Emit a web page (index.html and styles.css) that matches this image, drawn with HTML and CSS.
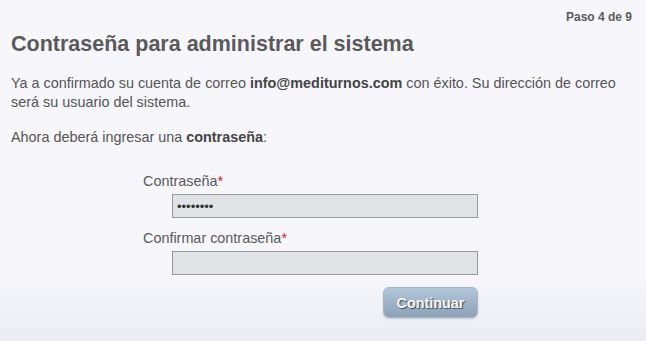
FILE: index.html
```html
<!DOCTYPE html>
<html>
<head>
    <meta charset="utf-8">
    <link rel="stylesheet" href="styles.css">
</head>
<body>
    <div class="wizard">
        <!-- Step counter -->
        <div class="step">Paso 4 de 9</div>

        <h1>Contraseña para administrar el sistema</h1>

        <p>Ya a confirmado su cuenta de correo <b>info@mediturnos.com</b> con éxito. Su dirección de correo será su usuario del sistema.</p>

        <p class="ask">Ahora deberá ingresar una <b>contraseña</b>:</p>

        <!-- Form -->
        <form class="form">
            <label>Contraseña<span class="req">*</span></label>
            <input type="password" value="12345678" />

            <label>Confirmar contraseña<span class="req">*</span></label>
            <input type="password" value="" />

            <div class="actions">
                <button type="button">Continuar</button>
            </div>
        </form>
    </div>
</body>
</html>
```

FILE: styles.css
```css
html, body {
    height: 100%;
}

body {
    margin: 0;
    background: linear-gradient(to bottom, #f6f6fb 0%, #f6f6fb 82%, #eaecf1 100%);
    font-family: "Liberation Sans", Arial, sans-serif;
    color: #555555;
}

.wizard {
    padding: 10px 14px 0 11px;
}

.step {
    text-align: right;
    font-size: 12px;
    font-weight: bold;
    color: #5c5c5c;
    line-height: 14px;
}

h1 {
    margin: 8px 0 0 0;
    font-size: 21.5px;
    line-height: 24px;
    color: #5a5a5a;
}

p {
    margin: 18px 0 0 0;
    font-size: 14.4px;
    line-height: 19px;
}

p.ask {
    margin-top: 16px;
}

b {
    color: #444444;
}

.form {
    width: 335px;
    margin: 26px 0 0 132px;
}

label {
    display: block;
    font-size: 14.4px;
    line-height: 16px;
    color: #5a5a5a;
}

.req {
    color: #cc2222;
}

input {
    display: block;
    box-sizing: border-box;
    width: 306px;
    height: 24px;
    margin: 5px 0 12px 29px;
    padding: 0 4px;
    border: 1px solid #9a9a9a;
    background-color: #e1e3e6;
    font-size: 13px;
    color: #333333;
    outline: none;
}

.actions {
    display: flex;
    justify-content: flex-end;
}

button {
    width: 95px;
    height: 31px;
    border: 1px solid #a5b6c8;
    border-radius: 6px;
    background: linear-gradient(to bottom, #b2c6da, #8ea2b7);
    font-family: "Liberation Sans", Arial, sans-serif;
    font-size: 14.4px;
    font-weight: bold;
    color: #f4f6f8;
    text-shadow: 1px 1px 1px #3c4a58;
    box-shadow: 0 1px 2px rgba(0, 0, 0, 0.15);
    cursor: pointer;
}
```
